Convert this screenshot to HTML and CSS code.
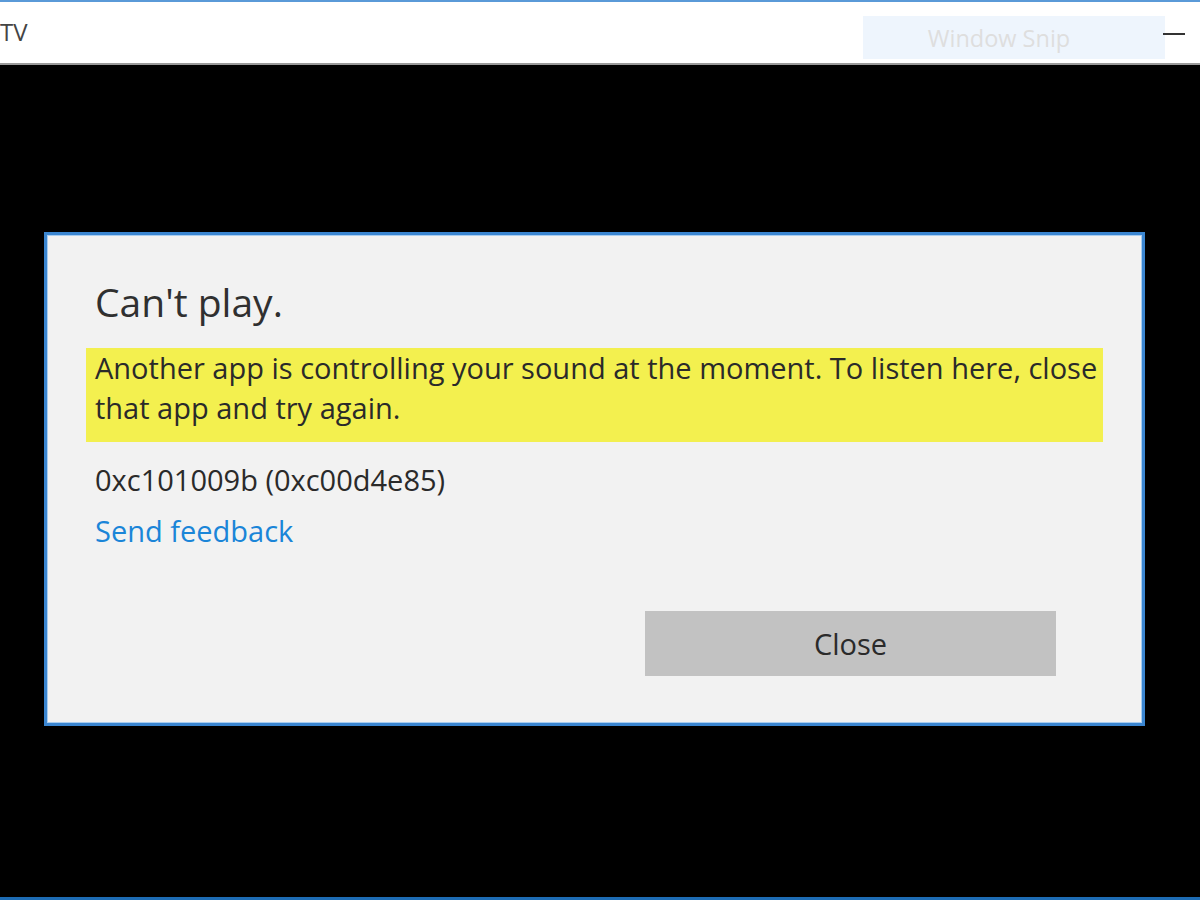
FILE: index.html
```html
<!DOCTYPE html>
<html lang="en">
<head>
    <meta charset="UTF-8">
    <title>Movies &amp; TV - Can't play</title>
    <link rel="stylesheet" href="styles.css">
</head>
<body>
    <div class="window">
        <div class="title-bar">
            <span class="app-name">TV</span>
            <div class="title-right">
                <div class="snip-label">Window Snip</div>
                <span class="minimize"></span>
            </div>
        </div>
        <div class="stage">
            <div class="dialog">
                <h1 class="dialog-title">Can't play.</h1>
                <p class="dialog-message">Another app is controlling your sound at the moment. To listen here, close<br>that app and try again.</p>
                <p class="error-code">0xc101009b (0xc00d4e85)</p>
                <a class="feedback-link" href="#">Send feedback</a>
                <div class="dialog-actions">
                    <button class="close-button">Close</button>
                </div>
            </div>
        </div>
    </div>
</body>
</html>
```

FILE: styles.css
```css
body {
    margin: 0;
    padding: 0;
    background-color: #000;
    font-family: 'Open Sans', 'Noto Sans', sans-serif;
    color: #2a2a2a;
}
.window {
    height: 900px;
    display: flex;
    flex-direction: column;
    box-sizing: border-box;
    border-top: 2px solid #5a9ad8;
    border-bottom: 3px solid #1d6cb4;
    overflow: hidden;
}
.title-bar {
    height: 61px;
    background-color: #fff;
    border-bottom: 2px solid #9a9a9a;
    display: flex;
    align-items: flex-start;
    justify-content: space-between;
}
.app-name {
    margin-top: 15px;
    font-size: 24px;
    line-height: 30px;
    color: #444;
}
.title-right {
    display: flex;
    align-items: flex-start;
    margin-right: 15px;
    padding-top: 14px;
}
.snip-label {
    width: 302px;
    height: 43px;
    box-sizing: border-box;
    padding-right: 30px;
    background-color: #eef5fd;
    color: #dedede;
    font-size: 23.5px;
    display: flex;
    align-items: center;
    justify-content: center;
    margin-right: -2px;
}
.minimize {
    width: 22px;
    height: 2px;
    background-color: #333;
    margin-top: 17px;
}
.stage {
    flex: 1;
    padding: 167px 0 0 44px;
}
.dialog {
    width: 1101px;
    height: 494px;
    box-sizing: border-box;
    background-color: #f2f2f2;
    border: 3px solid #3b86d1;
    box-shadow: inset 0 0 0 1px #a9cdf0;
    padding: 44px 39px 0 39px;
    display: flex;
    flex-direction: column;
}
.dialog-title {
    margin: 0 0 23px 9px;
    font-size: 39px;
    font-weight: normal;
    line-height: 46px;
    color: #303030;
}
.dialog-message {
    margin: 0;
    padding: 0 0 14px 9px;
    background-color: #f3f04f;
    font-size: 29px;
    line-height: 40px;
    white-space: nowrap;
}
.error-code {
    margin: 18px 0 0 9px;
    font-size: 29px;
    line-height: 40px;
}
.feedback-link {
    margin: 11px 0 0 9px;
    font-size: 29px;
    line-height: 40px;
    color: #1a85d8;
    text-decoration: none;
    align-self: flex-start;
}
.dialog-actions {
    display: flex;
    justify-content: flex-end;
    margin-top: 60px;
    padding-right: 47px;
}
.close-button {
    width: 411px;
    height: 65px;
    border: none;
    background-color: #c2c2c2;
    font-family: inherit;
    font-size: 29px;
    color: #2a2a2a;
}
```
